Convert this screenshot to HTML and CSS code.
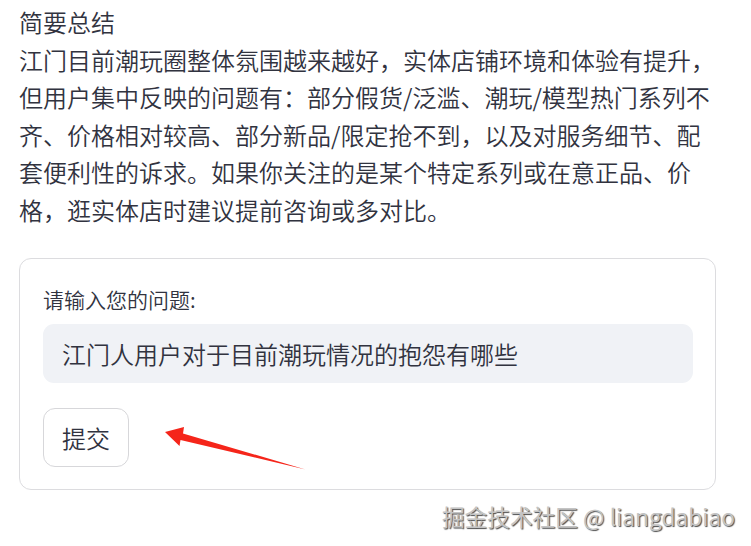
FILE: index.html
```html
<!DOCTYPE html>
<html lang="zh-CN">
<head>
<meta charset="utf-8">
<link rel="stylesheet" href="styles.css">
</head>
<body>
<main class="main">
  <div class="summary">
    <p>简要总结</p>
    <p>江门目前潮玩圈整体氛围越来越好，实体店铺环境和体验有提升，但用户集中反映的问题有：部分假货/泛滥、潮玩/模型热门系列不齐、价格相对较高、部分新品/限定抢不到，以及对服务细节、配套便利性的诉求。如果你关注的是某个特定系列或在意正品、价格，逛实体店时建议提前咨询或多对比。</p>
  </div>
  <form class="form-card">
    <label class="field-label" for="q">请输入您的问题:</label>
    <div class="input-box"><input id="q" class="text-input" type="text" value="江门人用户对于目前潮玩情况的抱怨有哪些"></div>
    <div class="btn-row"><button type="button" class="submit-btn">提交</button></div>
  </form>
</main>
<svg class="arrow" width="160" height="60" viewBox="150 415 160 60" aria-hidden="true">
  <polygon points="165,432 184,427 183,433.5 305.5,469.5 180.5,440 179.5,446" fill="#f5251a"/>
</svg>
<div class="watermark">掘金技术社区 @ liangdabiao</div>
</body>
</html>
```
FILE: styles.css
```css
html, body {
  margin: 0;
  padding: 0;
  background: #ffffff;
}
body {
  position: relative;
  width: 751px;
  height: 546px;
  overflow: hidden;
  font-family: "Noto Sans CJK SC", "Noto Sans", sans-serif;
  font-weight: 350;
  color: #31333f;
}
.main {
  width: 697px;
  margin-left: 19px;
  padding-top: 3px;
}
.summary p {
  margin: 0;
  font-size: 24px;
  line-height: 37.6px;
}
.form-card {
  margin-top: 29px;
  border: 1px solid #dcdcdf;
  border-radius: 12px;
  padding: 24px 22px 22px 23px;
  display: flex;
  flex-direction: column;
}
.field-label {
  display: block;
  font-size: 21px;
  line-height: 33px;
  margin-bottom: 8px;
  color: #31333f;
}
.input-box {
  height: 59px;
  background: #f0f2f6;
  border-radius: 11px;
  display: flex;
  align-items: center;
}
.text-input {
  flex: 1;
  border: none;
  background: transparent;
  outline: none;
  font-family: "Noto Sans CJK SC", "Noto Sans", sans-serif;
  font-weight: 350;
  font-size: 24px;
  color: #31333f;
  padding: 0 0 0 19px;
  margin: 0;
  height: 59px;
}
.btn-row {
  margin-top: 25px;
  display: flex;
}
.submit-btn {
  width: 86px;
  height: 59px;
  background: #ffffff;
  border: 1px solid #d7d7da;
  border-radius: 12px;
  font-family: "Noto Sans CJK SC", "Noto Sans", sans-serif;
  font-weight: 350;
  font-size: 24px;
  color: #31333f;
  padding: 0;
}
.arrow {
  position: absolute;
  left: 150px;
  top: 415px;
}
.watermark {
  position: absolute;
  right: 16px;
  top: 501px;
  font-size: 22.7px;
  line-height: 32px;
  font-weight: 400;
  color: #c4c4c4;
  text-shadow: 1px 1px 1px #4a4a4a, -1px -1px 0 #ffffff;
  white-space: nowrap;
}
```
